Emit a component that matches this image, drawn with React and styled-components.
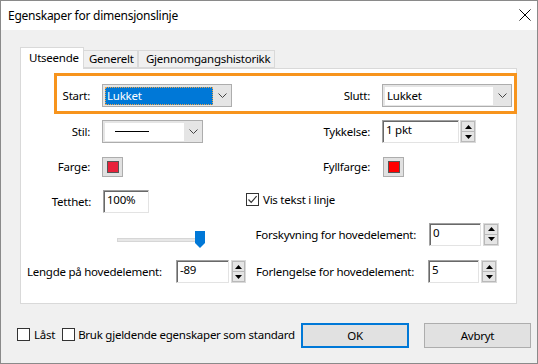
import styled, { createGlobalStyle } from "styled-components";

const GlobalStyle = createGlobalStyle`
  html, body {
    margin: 0;
    padding: 0;
    background: #f0f0f0;
  }
  body {
    font-family: "Noto Sans", "Segoe UI", sans-serif;
    font-size: 11.5px;
    letter-spacing: -0.25px;
    color: #000;
  }
  * {
    box-sizing: border-box;
  }
`;

const Window = styled.div`
  width: 538px;
  height: 364px;
  border: 1px solid #8a8a8a;
  display: flex;
  flex-direction: column;
  background: #f0f0f0;
`;

const TitleBar = styled.div`
  height: 29px;
  background: #fff;
  display: flex;
  align-items: center;
  justify-content: space-between;
  padding: 0 6px 1px 7px;
  flex-shrink: 0;
  font-size: 12px;
`;

const Body = styled.div`
  flex: 1;
  padding: 17px 20px 0 19px;
  display: flex;
  flex-direction: column;
`;

const TabStrip = styled.div`
  display: flex;
  align-items: flex-end;
  height: 21px;
`;

const Tab = styled.div`
  position: relative;
  z-index: ${(p) => (p.$active ? 2 : 1)};
  width: ${(p) => p.$w}px;
  height: ${(p) => (p.$active ? 22 : 18)}px;
  margin-bottom: ${(p) => (p.$active ? -1 : 0)}px;
  padding: ${(p) => (p.$active ? "2px 0 0 8px" : "0 0 0 " + p.$pad + "px")};
  background: ${(p) => (p.$active ? "#fff" : "#f0f0f0")};
  border: 1px solid #d9d9d9;
  border-bottom: ${(p) => (p.$active ? "none" : "1px solid #d9d9d9")};
  border-left: ${(p) => (p.$first || p.$active ? "1px solid #d9d9d9" : "none")};
  line-height: 16px;
  white-space: nowrap;
`;

const Panel = styled.div`
  height: 236px;
  background: #fff;
  border: 1px solid #d9d9d9;
  display: flex;
  flex-direction: column;
`;

const Highlight = styled.div`
  height: 41px;
  margin: 4px -1px 0 33px;
  border: 3px solid #f7941d;
  padding-top: 4px;
  display: flex;
  align-items: center;
`;

const Row = styled.div`
  display: flex;
  align-items: center;
  height: ${(p) => p.$h || 23}px;
  margin-top: ${(p) => p.$mt}px;
`;

const Field = styled.div`
  display: flex;
  align-items: center;
  flex-shrink: 0;
  width: ${(p) => (p.$w ? p.$w + "px" : "auto")};
  padding-left: ${(p) => p.$pl || 0}px;
  align-self: ${(p) => p.$self || "auto"};
  margin-top: ${(p) => p.$mt || 0}px;
`;

const Label = styled.span`
  width: ${(p) => p.$w}px;
  margin-right: ${(p) => (p.$gap === undefined ? 12 : p.$gap)}px;
  text-align: ${(p) => p.$align || "right"};
  white-space: nowrap;
  flex-shrink: 0;
`;

const Combo = styled.div`
  width: ${(p) => p.$w}px;
  height: 23px;
  border: 1px solid #adadad;
  background: #e5e5e5;
  display: flex;
  align-items: stretch;
  padding: 2px 0 1px 2px;
  flex-shrink: 0;
`;

const ComboValue = styled.div`
  flex: 1;
  background: ${(p) => (p.$selected ? "#0078d7" : "#fff")};
  color: ${(p) => (p.$selected ? "#fff" : "#000")};
  border: 1px dotted ${(p) => (p.$selected ? "#e9a54c" : "#fff")};
  display: flex;
  align-items: center;
  justify-content: ${(p) => (p.$center ? "center" : "flex-start")};
  padding-left: 1px;
  padding-bottom: 1px;
`;

const ComboArrow = styled.div`
  width: 18px;
  display: flex;
  align-items: center;
  justify-content: center;
  padding-bottom: 1px;
`;

const LineSample = styled.div`
  width: 34px;
  height: 1px;
  background: #000;
  margin-right: 26px;
`;

const TextBox = styled.input`
  width: ${(p) => p.$w}px;
  height: 23px;
  border: 1px solid;
  border-color: #a0a0a0 #e3e3e3 #e3e3e3 #a0a0a0;
  box-shadow: inset 1px 1px 0 #696969;
  background: #fff;
  font: inherit;
  letter-spacing: inherit;
  color: #000;
  padding: 0 0 4px 3px;
  margin: 0;
  outline: none;
  flex-shrink: 0;
`;

const Spinner = styled.div`
  width: ${(p) => p.$w || 16}px;
  height: 23px;
  margin-left: ${(p) => p.$gap || 1}px;
  display: flex;
  flex-direction: column;
  border: 1px solid #dadada;
  flex-shrink: 0;
`;

const SpinButton = styled.div`
  flex: 1;
  background: #e5e5e5;
  border: 1px solid #b9b9b9;
  display: flex;
  align-items: center;
  justify-content: center;
  &:first-child {
    border-bottom: none;
  }
`;

const Swatch = styled.div`
  width: 21px;
  height: 20px;
  background: #e1e1e1;
  border: 1px solid #adadad;
  display: flex;
  align-items: center;
  justify-content: center;
  flex-shrink: 0;
`;

const SwatchColor = styled.div`
  width: 12px;
  height: 12px;
  background: ${(p) => p.$color};
  border: 1px solid #555;
`;

const CheckBox = styled.div`
  width: 13px;
  height: 13px;
  border: 1px solid #333;
  background: #fff;
  margin-right: ${(p) => p.$gap || 4}px;
  display: flex;
  align-items: center;
  justify-content: center;
  flex-shrink: 0;
`;

const SliderWrap = styled.div`
  position: relative;
  width: 88px;
  height: 17px;
  display: flex;
  align-items: center;
  margin-top: 8px;
`;

const SliderTrack = styled.div`
  width: 84px;
  height: 4px;
  background: #e7e7e7;
  border: 1px solid #d6d6d6;
`;

const SliderThumb = styled.svg`
  position: absolute;
  left: 78px;
  top: 0;
`;

const Footer = styled.div`
  display: flex;
  align-items: center;
  margin: 19px -14px 0 -3px;
  height: 25px;
`;

const FooterCheck = styled.label`
  display: flex;
  align-items: center;
  margin-right: ${(p) => p.$mr || 0}px;
  margin-top: -3px;
  white-space: nowrap;
`;

const Buttons = styled.div`
  margin-left: auto;
  display: flex;
  gap: 15px;
`;

const Button = styled.div`
  width: ${(p) => p.$w}px;
  height: 25px;
  background: #e1e1e1;
  border: ${(p) => (p.$default ? "2px solid #0078d7" : "1px solid #adadad")};
  display: flex;
  align-items: center;
  justify-content: center;
  padding-bottom: 1px;
`;

const Chevron = () => (
  <svg width="9" height="5" viewBox="0 0 9 5">
    <path d="M0.5 0.5 L4.5 4.5 L8.5 0.5" fill="none" stroke="#444" strokeWidth="1" />
  </svg>
);

const Tri = ({ down }) => (
  <svg width="7" height="4" viewBox="0 0 7 4">
    <path d={down ? "M0 0 H7 L3.5 4 Z" : "M0 4 H7 L3.5 0 Z"} fill="#000" />
  </svg>
);

const Check = () => (
  <svg width="11" height="11" viewBox="0 0 11 11">
    <path d="M1.5 5.5 L4.2 8.3 L9.6 2.2" fill="none" stroke="#333" strokeWidth="1.2" />
  </svg>
);

const Spin = ({ value, w, gap, sw }) => (
  <>
    <TextBox $w={w} readOnly value={value} />
    <Spinner $gap={gap} $w={sw}>
      <SpinButton>
        <Tri />
      </SpinButton>
      <SpinButton>
        <Tri down />
      </SpinButton>
    </Spinner>
  </>
);

const Select = ({ w, value, selected, children }) => (
  <Combo $w={w}>
    <ComboValue $selected={selected} $center={!!children}>
      {children || value}
    </ComboValue>
    <ComboArrow>
      <Chevron />
    </ComboArrow>
  </Combo>
);

export default function App() {
  return (
    <>
      <GlobalStyle />
      <Window>
        <TitleBar>
          <span>Egenskaper for dimensjonslinje</span>
          <svg width="12" height="12" viewBox="0 0 12 12">
            <path d="M0.5 0.5 L11.5 11.5 M11.5 0.5 L0.5 11.5" stroke="#000" strokeWidth="1" />
          </svg>
        </TitleBar>
        <Body>
          <TabStrip>
            <Tab $active $w={64}>Utseende</Tab>
            <Tab $w={54} $pad={5}>Generelt</Tab>
            <Tab $first $w={137} $pad={7}>Gjennomgangshistorikk</Tab>
          </TabStrip>
          <Panel>
            <Highlight>
              <Label $w={33}>Start:</Label>
              <Select w={130} value="Lukket" selected />
              <Label $w={138}>Slutt:</Label>
              <Select w={130} value="Lukket" />
            </Highlight>

            <Row $mt={6}>
              <Field $w={221}>
                <Label $w={69}>Stil:</Label>
                <Select w={101}>
                  <LineSample />
                </Select>
              </Field>
              <Field>
                <Label $w={128}>Tykkelse:</Label>
                <Spin value="1 pkt" w={77} />
              </Field>
            </Row>

            <Row $mt={12}>
              <Field $w={221}>
                <Label $w={69}>Farge:</Label>
                <Swatch>
                  <SwatchColor $color="#e8213a" />
                </Swatch>
              </Field>
              <Field>
                <Label $w={128} $gap={13}>Fyllfarge:</Label>
                <Swatch>
                  <SwatchColor $color="#ff0000" />
                </Swatch>
              </Field>
            </Row>

            <Row $mt={12}>
              <Field $w={225}>
                <Label $w={70}>Tetthet:</Label>
                <TextBox $w={46} readOnly value="100%" />
              </Field>
              <Field $self="flex-start" $mt={2}>
                <CheckBox>
                  <Check />
                </CheckBox>
                <span>Vis tekst i linje</span>
              </Field>
            </Row>

            <Row $mt={10} $h={22}>
              <Field $w={221} $pl={96} $self="flex-start">
                <SliderWrap>
                  <SliderTrack />
                  <SliderThumb width="10" height="17" viewBox="0 0 10 17">
                    <path d="M0 0 H10 V12 L5 17 L0 12 Z" fill="#0078d7" />
                  </SliderThumb>
                </SliderWrap>
              </Field>
              <Field>
                <Label $w={174} $gap={13}>Forskyvning for hovedelement:</Label>
                <Spin value="0" w={52} gap={2} />
              </Field>
            </Row>

            <Row $mt={15}>
              <Field $w={229} $pl={6}>
                <Label $w={137} $gap={12} $align="left">Lengde på hovedelement:</Label>
                <Spin value="-89" w={53} gap={2} sw={15} />
              </Field>
              <Field>
                <Label $w={164} $gap={14}>Forlengelse for hovedelement:</Label>
                <Spin value="5" w={51} gap={2} />
              </Field>
            </Row>
          </Panel>

          <Footer>
            <FooterCheck $mr={7}>
              <CheckBox />
              Låst
            </FooterCheck>
            <FooterCheck>
              <CheckBox $gap={3} />
              Bruk gjeldende egenskaper som standard
            </FooterCheck>
            <Buttons>
              <Button $w={108} $default>OK</Button>
              <Button $w={107}>Avbryt</Button>
            </Buttons>
          </Footer>
        </Body>
      </Window>
    </>
  );
}
